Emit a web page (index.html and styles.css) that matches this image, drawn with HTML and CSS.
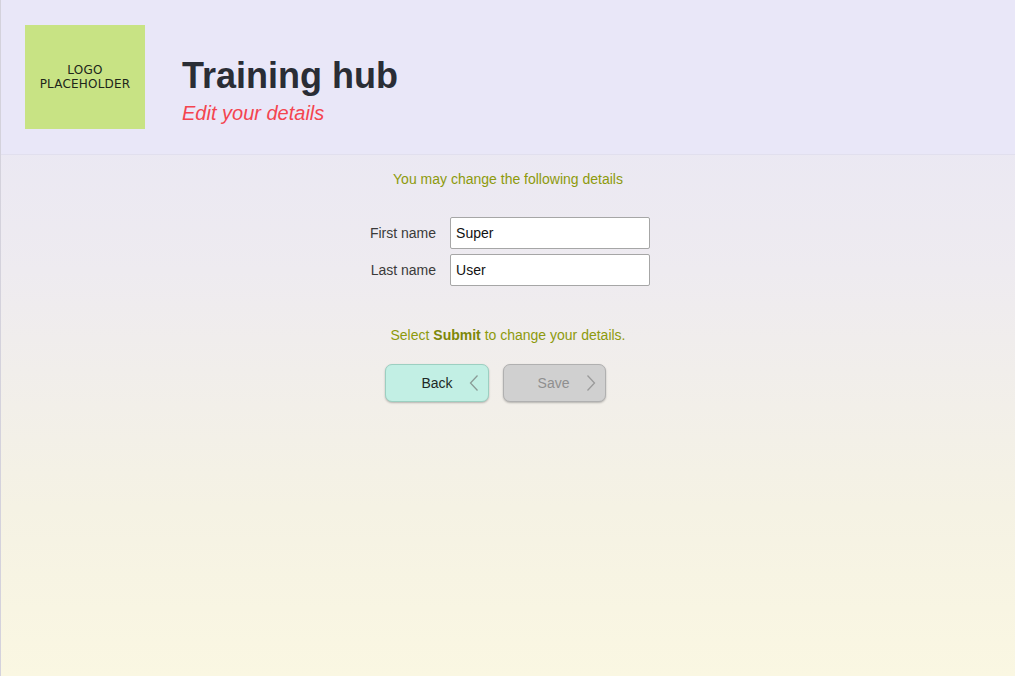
FILE: index.html
```html
<!DOCTYPE html>
<html lang="en">
<head>
<meta charset="utf-8">
<title>Training hub</title>
<link rel="stylesheet" href="styles.css">
</head>
<body>
<div class="page">
  <header class="header">
    <div class="logo"><span>LOGO<br>PLACEHOLDER</span></div>
    <div class="titles">
      <h1 class="title">Training hub</h1>
      <p class="subtitle">Edit your details</p>
    </div>
  </header>
  <main class="main">
    <p class="intro">You may change the following details</p>
    <form class="form">
      <label class="label" for="first">First name</label>
      <input class="field" id="first" type="text" value="Super">
      <label class="label" for="last">Last name</label>
      <input class="field" id="last" type="text" value="User">
    </form>
    <p class="hint">Select <strong>Submit</strong> to change your details.</p>
    <div class="actions">
      <button class="btn btn-back" type="button"><span class="btn-text">Back</span>
        <svg class="chev" width="10" height="18" viewBox="0 0 10 18"><path d="M8.5 1.5 L1.5 9 L8.5 16.5" fill="none" stroke="#8a9a96" stroke-width="1.3"/></svg>
      </button>
      <button class="btn btn-save" type="button" disabled><span class="btn-text">Save</span>
        <svg class="chev" width="10" height="18" viewBox="0 0 10 18"><path d="M1.5 1.5 L8.5 9 L1.5 16.5" fill="none" stroke="#9a9a9a" stroke-width="1.3"/></svg>
      </button>
    </div>
  </main>
</div>
</body>
</html>
```

FILE: styles.css
```css
html, body {
  margin: 0;
  padding: 0;
}
body {
  font-family: "Liberation Sans", Arial, sans-serif;
  background: linear-gradient(180deg, #e7e5f6 0%, #eeebf0 40%, #f5f2e4 75%, #faf7e2 100%);
  min-height: 100vh;
}
.page {
  min-height: 100vh;
  border-left: 1px solid #d4d2dc;
  box-sizing: border-box;
}
.header {
  height: 155px;
  box-sizing: border-box;
  padding: 25px 25px 0 24px;
  display: flex;
  align-items: flex-start;
  background: #e9e7f8;
  border-bottom: 1px solid #e1dfee;
}
.logo {
  width: 120px;
  height: 104px;
  background: #c8e384;
  display: flex;
  align-items: center;
  justify-content: center;
  text-align: center;
  font-family: "DejaVu Sans", sans-serif;
  font-size: 12px;
  line-height: 14px;
  color: #20251a;
  letter-spacing: 0.2px;
}
.titles {
  margin-left: 37px;
  padding-top: 29px;
}
.title {
  margin: 0;
  font-size: 36px;
  line-height: 44px;
  font-weight: bold;
  color: #2a2d35;
}
.subtitle {
  margin: 2px 0 0 0;
  font-size: 20px;
  line-height: 26px;
  font-style: italic;
  color: #f4444f;
}
.main {
  display: flex;
  flex-direction: column;
  align-items: center;
  padding-top: 16px;
}
.intro {
  margin: 0 0 30px 0;
  font-size: 14px;
  line-height: 16px;
  color: #8d9a0c;
}
.form {
  display: grid;
  grid-template-columns: auto 200px;
  column-gap: 14px;
  row-gap: 5px;
  align-items: center;
  margin-left: 4px;
}
.label {
  font-size: 14px;
  color: #3a3a3a;
  text-align: right;
}
.field {
  width: 200px;
  height: 32px;
  box-sizing: border-box;
  border: 1px solid #a6a6a6;
  border-radius: 2px;
  background: #ffffff;
  font-family: "Liberation Sans", Arial, sans-serif;
  font-size: 14px;
  color: #111111;
  padding: 0 5px;
}
.hint {
  margin: 41px 0 21px 0;
  font-size: 14px;
  line-height: 16px;
  color: #8d9a0c;
}
.hint strong {
  color: #7d8708;
}
.actions {
  display: flex;
  gap: 14px;
  margin-right: 26px;
}
.btn {
  width: 104px;
  height: 38px;
  box-sizing: border-box;
  border-radius: 7px;
  display: flex;
  align-items: center;
  justify-content: flex-end;
  padding: 0 9px 0 0;
  font-family: "Liberation Sans", Arial, sans-serif;
  font-size: 14px;
  box-shadow: 0 1px 2px rgba(0,0,0,0.25);
}
.btn-text {
  margin-right: 16px;
}
.btn-back {
  background: #c2efe4;
  border: 1px solid #9ccfc1;
  color: #1e2a26;
}
.btn-save {
  width: 103px;
  background: #d0d0d0;
  border: 1px solid #b0b0b0;
  color: #8f8f8f;
}
.chev {
  display: block;
}
```
